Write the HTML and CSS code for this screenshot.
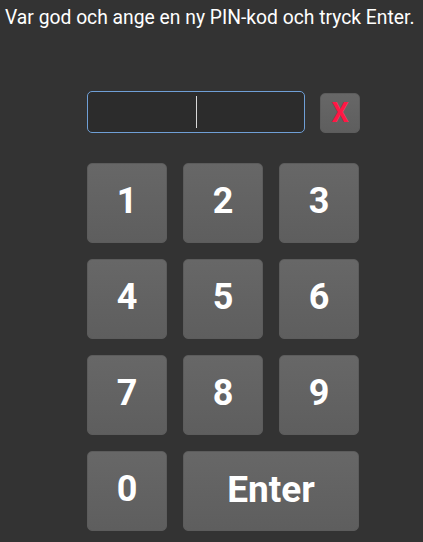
FILE: index.html
```html
<!DOCTYPE html>
<html lang="sv">
<head>
    <meta charset="UTF-8">
    <meta name="viewport" content="width=device-width, initial-scale=1.0">
    <title>PIN-kod</title>
    <link rel="stylesheet" href="styles.css">
</head>
<body>
    <div class="prompt">Var god och ange en ny PIN-kod och tryck Enter.</div>

    <div class="pad">
        <div class="entry-row">
            <div class="pin-input"><span class="caret"></span></div>
            <button class="key clear">X</button>
        </div>

        <div class="keys">
            <button class="key">1</button>
            <button class="key">2</button>
            <button class="key">3</button>
            <button class="key">4</button>
            <button class="key">5</button>
            <button class="key">6</button>
            <button class="key">7</button>
            <button class="key">8</button>
            <button class="key">9</button>
            <button class="key">0</button>
            <button class="key enter">Enter</button>
        </div>
    </div>
</body>
</html>
```

FILE: styles.css
```css
body {
    margin: 0;
    background-color: #333333;
    font-family: Roboto, "Liberation Sans", Arial, sans-serif;
    color: #ffffff;
}

.prompt {
    padding: 6px 0 0 5px;
    font-size: 19.3px;
    line-height: 23px;
    white-space: nowrap;
}

.pad {
    width: 273px;
    margin: 62px 0 0 87px;
}

.entry-row {
    display: flex;
    align-items: flex-end;
    gap: 15px;
    margin-bottom: 30px;
}

.pin-input {
    width: 216px;
    height: 40px;
    box-sizing: content-box;
    border: 1px solid #6f9fd6;
    border-radius: 5px;
    background-color: #2c2c2c;
    display: flex;
    align-items: center;
    justify-content: center;
}

.caret {
    display: block;
    width: 1px;
    height: 32px;
    margin-left: 1px;
    background-color: #d8d8d8;
}

.keys {
    display: grid;
    grid-template-columns: repeat(3, 80px);
    grid-auto-rows: 80px;
    gap: 16px;
}

.key {
    margin: 0;
    padding: 0 0 4px;
    border: 1px solid #5c5c5c;
    border-radius: 5px;
    background: linear-gradient(#676767, #5e5e5e);
    color: #ffffff;
    font-family: Roboto, "Liberation Sans", Arial, sans-serif;
    font-weight: bold;
    font-size: 36px;
    cursor: pointer;
}

.key.enter {
    grid-column: span 2;
    font-size: 37px;
}

.key.clear {
    width: 40px;
    height: 40px;
    padding: 0;
    font-size: 27px;
    color: #ff1744;
}
```
